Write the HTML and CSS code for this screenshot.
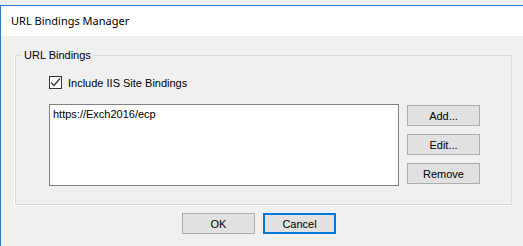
FILE: index.html
```html
<!DOCTYPE html>
<html lang="en">
<head>
    <meta charset="UTF-8">
    <title>URL Bindings Manager</title>
    <link rel="stylesheet" href="styles.css">
</head>
<body>

    <div class="window">
        <div class="title-bar">URL Bindings Manager</div>

        <div class="dialog-body">
            <fieldset class="group">
                <legend>URL Bindings</legend>

                <label class="check-row">
                    <span class="checkbox">
                        <svg width="11" height="11" viewBox="0 0 11 11">
                            <path d="M1 5.5 L4 8.5 L10 1.5" fill="none" stroke="#333" stroke-width="1.3"/>
                        </svg>
                    </span>
                    Include IIS Site Bindings
                </label>

                <div class="bindings">
                    <div class="listbox">
                        <div class="list-item">https://Exch2016/ecp</div>
                    </div>
                    <div class="side-buttons">
                        <button class="win-button">Add...</button>
                        <button class="win-button">Edit...</button>
                        <button class="win-button">Remove</button>
                    </div>
                </div>
            </fieldset>

            <div class="dialog-buttons">
                <button class="win-button">OK</button>
                <button class="win-button default">Cancel</button>
            </div>
        </div>
    </div>

</body>
</html>
```

FILE: styles.css
```css
body {
    margin: 0;
    padding-top: 5px;
    background-color: #efefef;
    font-family: 'Liberation Sans', Arial, sans-serif;
    font-size: 11px;
    color: #000;
}

.window {
    border-top: 1px solid #2b7ac9;
    border-left: 1px solid #2b7ac9;
    background-color: #f0f0f0;
    height: 240px;
}

.title-bar {
    background-color: #fff;
    height: 30px;
    line-height: 30px;
    padding-left: 10px;
    font-family: 'Noto Sans', 'Segoe UI', sans-serif;
    font-size: 11px;
}

.dialog-body {
    padding: 11px 11px 0 14px;
}

.group {
    margin: 0;
    padding: 0 0 18px 6px;
    border: 1px solid #dcdcdc;
    box-shadow: -1px 1px 0 #fff;
    min-width: 0;
}

.group legend {
    padding: 0 2px;
    line-height: 16px;
    font-size: 11px;
}

.check-row {
    display: flex;
    align-items: center;
    gap: 6px;
    margin: 13px 0 0 27px;
    height: 13px;
}

.checkbox {
    width: 11px;
    height: 11px;
    border: 1px solid #333;
    background-color: #fff;
    display: flex;
}

.bindings {
    display: flex;
    gap: 8px;
    margin: 15px 0 0 27px;
}

.listbox {
    width: 348px;
    height: 80px;
    border: 1px solid #828282;
    background-color: #fff;
}

.list-item {
    padding: 3px 3px;
}

.side-buttons {
    display: flex;
    flex-direction: column;
    gap: 8px;
    padding-top: 1px;
}

.win-button {
    width: 73px;
    height: 21px;
    padding: 0;
    background-color: #e1e1e1;
    border: 1px solid #adadad;
    font-family: 'Liberation Sans', Arial, sans-serif;
    font-size: 11px;
    color: #000;
}

.win-button.default {
    border: 2px solid #0078d7;
}

.dialog-buttons {
    display: flex;
    gap: 8px;
    padding: 8px 0 0 167px;
}
```
